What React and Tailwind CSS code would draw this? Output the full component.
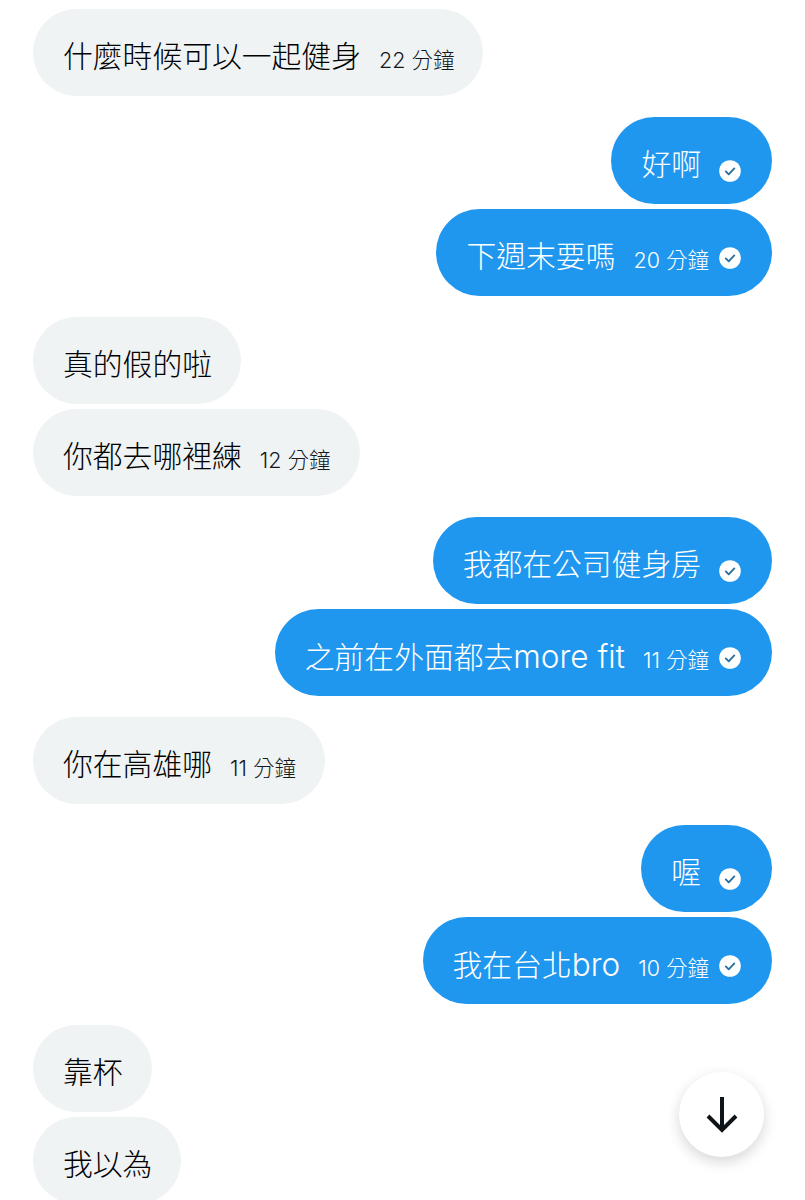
import React from "react";

function Check() {
  return (
    <svg width="22" height="22" viewBox="0 0 22 22" className="block shrink-0">
      <circle cx="11" cy="11" r="10.8" fill="#fff" />
      <path d="M6.8 11.4l2.9 2.9 5.6-5.9" fill="none" stroke="#2a6f9e" strokeWidth="1.9" strokeLinecap="round" strokeLinejoin="round" />
    </svg>
  );
}

function In({ text, time, className = "" }) {
  return (
    <div className={"flex " + className}>
      <div className="flex h-[87px] items-center rounded-[44px] bg-[#eff3f4] pl-[30px] pr-[29px] text-black">
        <span className="mt-[8px] text-[29.8px] leading-none font-light">{text}</span>
        {time && <span className="ml-[18px] mt-[17px] text-[21.5px] leading-none font-light text-[#14181b]">{time}</span>}
      </div>
    </div>
  );
}

function Out({ text, latin, time, className = "" }) {
  return (
    <div className={"flex justify-end " + className}>
      <div className="flex h-[87px] items-center rounded-[44px] bg-[#2097ef] pl-[30px] pr-[31px] text-white">
        <span className="mt-[8px] text-[29.8px] leading-none font-light">
          {text}
          {latin && <span className="text-[31.5px]">{latin}</span>}
        </span>
        {time ? (
          <span className="ml-[18px] mt-[17px] text-[21.5px] leading-none font-light">{time}</span>
        ) : null}
        <span className={time ? "ml-[10px] mt-[11px]" : "ml-[18px] mt-[21px]"}><Check /></span>
      </div>
    </div>
  );
}

export default function App() {
  return (
    <div className="relative h-[1200px] w-[805px] overflow-hidden bg-white px-[33px] pt-[9px] font-['Inter','Noto_Sans_CJK_TC',sans-serif]">
      <In text="什麼時候可以一起健身" time="22 分鐘" />
      <Out text="好啊" className="mt-[21px]" />
      <Out text="下週末要嗎" time="20 分鐘" className="mt-[5px]" />
      <In text="真的假的啦" className="mt-[21px]" />
      <In text="你都去哪裡練" time="12 分鐘" className="mt-[5px]" />
      <Out text="我都在公司健身房" className="mt-[21px]" />
      <Out text="之前在外面都去" latin="more fit" time="11 分鐘" className="mt-[5px]" />
      <In text="你在高雄哪" time="11 分鐘" className="mt-[21px]" />
      <Out text="喔" className="mt-[21px]" />
      <Out text="我在台北" latin="bro" time="10 分鐘" className="mt-[5px]" />
      <In text="靠杯" className="mt-[21px]" />
      <In text="我以為" className="mt-[5px]" />
      <button className="absolute left-[679px] top-[1072px] flex h-[85px] w-[85px] items-center justify-center rounded-full bg-white shadow-[0_5px_14px_rgba(0,0,0,0.16)]">
        <svg width="38" height="38" viewBox="0 0 38 38" fill="none" stroke="#0f1419" strokeWidth="4">
          <path d="M19 1v33M5 20l14 14 14-14" />
        </svg>
      </button>
    </div>
  );
}
